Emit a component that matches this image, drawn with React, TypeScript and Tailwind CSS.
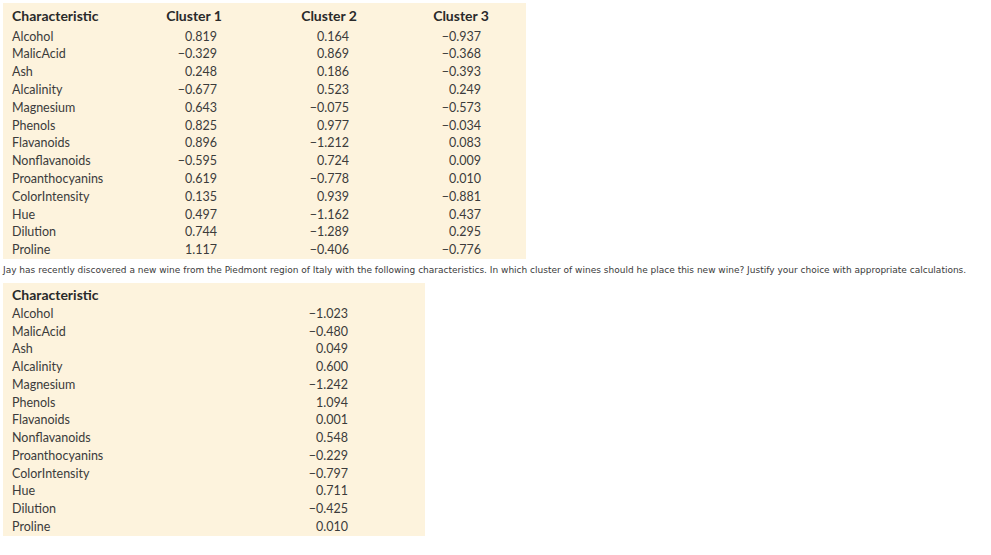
import React from 'react';

type Row = { name: string; values: string[] };

const clusters: Row[] = [
  { name: 'Alcohol', values: ['0.819', '0.164', '−0.937'] },
  { name: 'MalicAcid', values: ['−0.329', '0.869', '−0.368'] },
  { name: 'Ash', values: ['0.248', '0.186', '−0.393'] },
  { name: 'Alcalinity', values: ['−0.677', '0.523', '0.249'] },
  { name: 'Magnesium', values: ['0.643', '−0.075', '−0.573'] },
  { name: 'Phenols', values: ['0.825', '0.977', '−0.034'] },
  { name: 'Flavanoids', values: ['0.896', '−1.212', '0.083'] },
  { name: 'Nonflavanoids', values: ['−0.595', '0.724', '0.009'] },
  { name: 'Proanthocyanins', values: ['0.619', '−0.778', '0.010'] },
  { name: 'ColorIntensity', values: ['0.135', '0.939', '−0.881'] },
  { name: 'Hue', values: ['0.497', '−1.162', '0.437'] },
  { name: 'Dilution', values: ['0.744', '−1.289', '0.295'] },
  { name: 'Proline', values: ['1.117', '−0.406', '−0.776'] },
];

const newWine: Row[] = [
  { name: 'Alcohol', values: ['−1.023'] },
  { name: 'MalicAcid', values: ['−0.480'] },
  { name: 'Ash', values: ['0.049'] },
  { name: 'Alcalinity', values: ['0.600'] },
  { name: 'Magnesium', values: ['−1.242'] },
  { name: 'Phenols', values: ['1.094'] },
  { name: 'Flavanoids', values: ['0.001'] },
  { name: 'Nonflavanoids', values: ['0.548'] },
  { name: 'Proanthocyanins', values: ['−0.229'] },
  { name: 'ColorIntensity', values: ['−0.797'] },
  { name: 'Hue', values: ['0.711'] },
  { name: 'Dilution', values: ['−0.425'] },
  { name: 'Proline', values: ['0.010'] },
];

const tableFont = { fontFamily: 'Lato, "Open Sans", sans-serif' };

export default function App() {
  return (
    <div className="min-h-[555px] w-[991px] bg-white p-[3px]">
      {/* Cluster table */}
      <div
        className="w-[523px] bg-[#fdf3dd] pl-[9px] text-[12.5px] text-[#3b3b3b]"
        style={tableFont}
      >
        <div className="grid h-[25px] grid-cols-[128px_82px_135px_132px] items-center text-[14px] font-bold text-[#2a2a2a]">
          <span>Characteristic</span>
          <span className="text-right">Cluster 1</span>
          <span className="text-right">Cluster 2</span>
          <span className="text-right">Cluster 3</span>
        </div>
        {clusters.map((r) => (
          <div
            key={r.name}
            className="grid h-[17.8px] grid-cols-[128px_82px_135px_132px] items-center leading-none"
          >
            <span>{r.name}</span>
            <span className="pr-[5px] text-right">{r.values[0]}</span>
            <span className="pr-[8px] text-right">{r.values[1]}</span>
            <span className="pr-[8px] text-right">{r.values[2]}</span>
          </div>
        ))}
      </div>

      <p
        className="h-[24px] pt-[4px] text-[9px] leading-[14px] text-[#3a3a3a]"
        style={{ fontFamily: '"DejaVu Sans", Verdana, sans-serif' }}
      >
        Jay has recently discovered a new wine from the Piedmont region of Italy with the following characteristics. In which cluster of wines should he place this new wine? Justify your choice with appropriate calculations.
      </p>

      {/* New wine table */}
      <div
        className="w-[422px] bg-[#fdf3dd] pl-[9px] text-[12.5px] text-[#3b3b3b]"
        style={tableFont}
      >
        <div className="flex h-[22px] items-center text-[14px] font-bold text-[#2a2a2a]">
          Characteristic
        </div>
        {newWine.map((r) => (
          <div
            key={r.name}
            className="grid h-[17.75px] grid-cols-[128px_208px] items-center leading-none"
          >
            <span>{r.name}</span>
            <span className="text-right">{r.values[0]}</span>
          </div>
        ))}
      </div>
    </div>
  );
}
